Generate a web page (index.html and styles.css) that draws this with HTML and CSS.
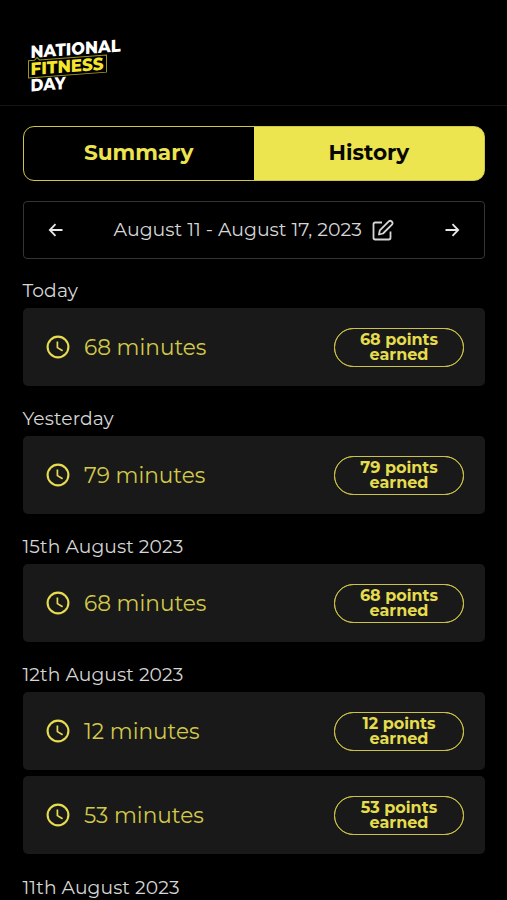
FILE: index.html
```
<!DOCTYPE html>
<html lang="en">
<head>
<meta charset="utf-8">
<title>National Fitness Day</title>
<link rel="stylesheet" href="styles.css">
</head>
<body>
<svg width="0" height="0" class="defs" aria-hidden="true">
  <symbol id="clock" viewBox="0 0 24 24"><circle cx="12" cy="12" r="10.4" stroke-width="2.1"/><path d="M11.4 6.4v6.2l5.2 3.2" stroke-width="1.7"/></symbol>
  <symbol id="arrow" viewBox="0 0 16 16"><path d="M1.5 8h12.5M8.5 2.2L14.2 8l-5.7 5.8" stroke-width="1.8"/></symbol>
</svg>
<header class="header">
  <svg class="logo" width="110" height="68" viewBox="25 28 110 68">
    <g transform="translate(31 0) skewY(-4.2)">
      <text class="logo-text" x="-.5" y="58" textLength="90" lengthAdjust="spacingAndGlyphs">NATIONAL</text>
      <path class="logo-box" d="M-2.5 60.500H3.500l2.500-2.500 2.500 2.500H75.500V77.700H-2.500Z"/>
      <text class="logo-text logo-yellow" x="-.5" y="75" textLength="73" lengthAdjust="spacingAndGlyphs">FITNESS</text>
      <text class="logo-text" x="-.5" y="91.500" textLength="35" lengthAdjust="spacingAndGlyphs">DAY</text>
    </g>
  </svg>
</header>
<main class="content">
  <nav class="tabs">
    <div class="tab"><span>Summary</span></div>
    <div class="tab active"><span>History</span></div>
  </nav>
  <div class="range">
    <svg class="arrow back"><use href="#arrow"/></svg>
    <div class="dates"><span class="period">August 11 - August 17, 2023</span>
      <svg class="edit" viewBox="0 0 22 22"><path d="M10 3.500H3.200Q1.500 3.500 1.500 5.200V18.800Q1.500 20.500 3.200 20.500H16.800Q18.500 20.500 18.500 18.800V12.500"/><path d="M7 15.500l.8-4.200L17 2.200Q18.300 1.200 19.700 2.500T20.200 5.300L11 14.500Z"/></svg>
    </div>
    <svg class="arrow"><use href="#arrow"/></svg>
  </div>
  <section class="day"><h2>Today</h2>
    <div class="card"><svg class="clock"><use href="#clock"/></svg><span class="minutes">68 minutes</span><span class="points">68 points<br>earned</span></div>
  </section>
  <section class="day"><h2>Yesterday</h2>
    <div class="card"><svg class="clock"><use href="#clock"/></svg><span class="minutes">79 minutes</span><span class="points">79 points<br>earned</span></div>
  </section>
  <section class="day"><h2>15th August 2023</h2>
    <div class="card"><svg class="clock"><use href="#clock"/></svg><span class="minutes">68 minutes</span><span class="points">68 points<br>earned</span></div>
  </section>
  <section class="day"><h2>12th August 2023</h2>
    <div class="card"><svg class="clock"><use href="#clock"/></svg><span class="minutes">12 minutes</span><span class="points">12 points<br>earned</span></div>
    <div class="card"><svg class="clock"><use href="#clock"/></svg><span class="minutes">53 minutes</span><span class="points">53 points<br>earned</span></div>
  </section>
  <section class="day"><h2>11th August 2023</h2></section>
</main>
</body>
</html>
```
FILE: styles.css
```
* { box-sizing: border-box; }
body {
  margin: 0;
  height: 900px;
  overflow: hidden;
  background: #000;
  color: #d6d6d6;
  font-family: Montserrat, Inter, sans-serif;
}
svg { fill: none; stroke: currentColor; flex: none; }
.defs { position: absolute; }
.header { height: 106px; padding: 28px 25px 0; border-bottom: 1px solid #161616; }
.logo { display: block; stroke: none; }
.logo-text { fill: #fff; font-size: 17.500px; font-weight: 800; }
.logo-yellow { fill: #f5e62d; }
.logo-box { stroke: #a1961c; stroke-width: 1; }
.content { padding: 20px 22px 0 22.500px; }
.tabs {
  display: flex;
  height: 55px;
  border: 1px solid #cfc646;
  border-radius: 11px;
  background: linear-gradient(90deg, #000 50%, #ece550 50%);
  overflow: hidden;
}
.tab {
  flex: 1;
  display: flex;
  align-items: center;
  justify-content: center;
  padding-bottom: 3px;
  color: #ece34f;
  font-size: 21.600px;
  font-weight: 700;
}
.tab.active { background: #ece550; color: #080800; }
.range {
  display: flex;
  align-items: center;
  height: 58px;
  margin-top: 20px;
  padding: 0 24px;
  border: 1px solid #343434;
  border-radius: 4px;
}
.arrow { width: 16px; height: 16px; color: #e8e8e8; }
.back { transform: scaleX(-1); }
.dates { flex: 1; display: flex; align-items: center; justify-content: center; gap: 10px; font-size: 18.900px; white-space: nowrap; }
.period { padding-bottom: 2px; }
.edit { width: 22px; height: 22px; stroke-width: 1.800; stroke-linejoin: round; }
.day { margin-top: 17px; }
.range + .day { margin-top: 16px; }
.day:last-child { margin-top: 18px; }
h2 { margin: 0; height: 33px; line-height: 31px; font-size: 18.700px; font-weight: 400; letter-spacing: .1px; }
.card {
  display: flex;
  align-items: center;
  height: 78px;
  padding: 0 21px 0 23.500px;
  border-radius: 5px;
  background: #191919;
  color: #e5dc4e;
}
.card + .card { margin-top: 6px; }
.clock { width: 24px; height: 24px; }
.minutes { margin-left: 14px; font-size: 21.600px; font-weight: 400; color: #d2c94a; }
.points {
  width: 130px;
  height: 39px;
  margin-left: auto;
  padding-top: 3px;
  border: 1.500px solid #cbc247;
  outline: .4px solid #cbc247;
  outline-offset: -1.400px;
  border-radius: 20px;
  text-align: center;
  font-size: 16px;
  font-weight: 700;
  line-height: 15.500px;
}
```
